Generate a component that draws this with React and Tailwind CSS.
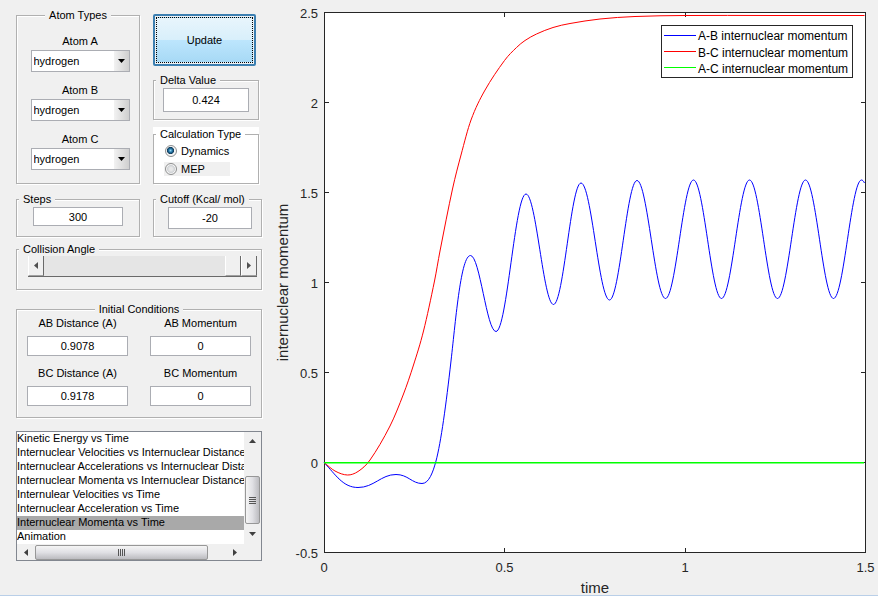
import { useState } from "react"

const plots = [
    "Kinetic Energy vs Time",
    "Internuclear Velocities vs Internuclear Distance",
    "Internuclear Accelerations vs Internuclear Distance",
    "Internuclear Momenta vs Internuclear Distance",
    "Internulear Velocities vs Time",
    "Internuclear Acceleration vs Time",
    "Internuclear Momenta vs Time",
    "Animation",
];

// turning points of the A-B curve once it starts to vibrate
const vibration = [
    [470.5, 255.5], [496, 331.5], [526, 194], [553.5, 304.5], [581, 183], [609.5, 300],
    [637, 180.5], [665.5, 298.5], [693.5, 180], [721.5, 298.5], [749.5, 180],
    [777.5, 298.5], [805.5, 180], [833.5, 298.5], [861.5, 180],
];

const bcMomentum = [
    [324, 462.5], [335, 471], [347.5, 475], [358, 471.5], [370, 460], [390, 426],
    [403.5, 394], [413.5, 365], [423.5, 331], [434.5, 281], [440, 251], [452.5, 189],
    [461, 155], [471, 120], [484.5, 91], [504.5, 60.5], [516.5, 47.5], [525, 40.5], [536.5, 34],
    [553, 27.5], [570, 23.5], [600, 19], [635, 16.5], [685, 15.5], [770, 15.5], [864.5, 15.5],
];

function wavePath(points) {
    return points.slice(1).map(([x, y], i) => {
        const [px, py] = points[i];
        const k = (x - px) * 0.3642;
        return `C${px + k} ${py} ${x - k} ${y} ${x} ${y}`;
    }).join("");
}

function smoothPath(points) {
    const slope = points.map((p, i) => {
        const a = points[Math.max(i - 1, 0)];
        const b = points[Math.min(i + 1, points.length - 1)];
        return (b[1] - a[1]) / (b[0] - a[0]);
    });
    return "M" + points[0].join(" ") + points.slice(1).map(([x, y], i) => {
        const [px, py] = points[i];
        const k = (x - px) / 3;
        return `C${px + k} ${py + slope[i] * k} ${x - k} ${y - slope[i + 1] * k} ${x} ${y}`;
    }).join("");
}

const abPath =
    "M324 462.5C336 475 343 487.5 358 487.5C374 487.5 381 474.5 396 474.5C408 474.5 412 483.5 422 483.5" +
    "C429 483.5 433 472 436 461C441 442 446 405 451 361C456 317 461 255.5 470.5 255.5" +
    wavePath(vibration) +
    "C862.5 180 863.5 181 864.5 183";

export default function App() {
    return <div className="flex min-h-screen items-start border-b border-[#b9cfe8] bg-[#f0f0f0] font-['Liberation_Sans',Arial,sans-serif] text-[11px] leading-[14px] text-black">
        <aside className="w-[270px] shrink-0 pt-2 pr-2 pb-4 pl-4">
            <div className="flex gap-[13px]">
                <Panel title="Atom Types" centered className="w-[124px]" inner="flex flex-col items-center gap-[11px] pt-3 pb-3 pl-1">
                    <AtomSelect label="Atom A" />
                    <AtomSelect label="Atom B" />
                    <AtomSelect label="Atom C" />
                </Panel>
                <div className="flex w-[106px] flex-col gap-[7px] pt-[6px]">
                    <button className="mr-[3px] h-[52px] rounded-[2px] border-2 border-[#3c7fb1] p-px">
                        <span className="flex h-full items-center justify-center border border-dotted border-black bg-[linear-gradient(#e8f5fc,#d8effb_50%,#bde6fd_50%,#a7d9f5)]">Update</span>
                    </button>
                    <Panel title="Delta Value" inner="px-[9px] pt-px pb-[7px]">
                        <NumberBox label="Delta Value" value="0.424" className="h-6" />
                    </Panel>
                    <CalculationType />
                </div>
            </div>

            <div className="mt-2 flex gap-[13px]">
                <Panel title="Steps" className="w-[124px]" inner="px-4 pt-px pb-[10px]">
                    <NumberBox label="Steps" value="300" className="h-[19px]" />
                </Panel>
                <Panel title="Cutoff (Kcal/ mol)" className="w-[109px]" inner="pr-[9px] pt-px pb-[7px] pl-[14px]">
                    <NumberBox label="Cutoff (Kcal/ mol)" value="-20" className="h-[22px]" />
                </Panel>
            </div>

            <Panel title="Collision Angle" className="mt-[5px]" inner="pr-1 pb-3 pl-[11px]">
                <AngleSlider />
            </Panel>

            <Panel title="Initial Conditions" centered className="mt-3" inner="grid grid-cols-2 gap-x-[22px] gap-y-[10px] px-[10px] pb-[11px]">
                <Field label="AB Distance (A)" value="0.9078" />
                <Field label="AB Momentum" value="0" />
                <Field label="BC Distance (A)" value="0.9178" />
                <Field label="BC Momentum" value="0" />
            </Panel>

            <PlotList />
        </aside>
        <main className="min-w-0 flex-1">
            <Chart />
        </main>
    </div>
}

function Panel({ title, centered, white, className = "", inner, children }) {
    return <fieldset className={"min-w-0 border border-[#b0b0b0] shadow-[1px_1px_0_white,inset_1px_1px_0_white] " + className}>
        <legend className={"whitespace-nowrap px-1 " + (white ? "bg-white " : "bg-[#f0f0f0] ") + (centered ? "mx-auto" : "ml-0.5")}>
            {title}
        </legend>
        <div className={inner}>{children}</div>
    </fieldset>
}

function AtomSelect({ label }) {
    return <label className="flex flex-col items-center gap-0.5">
        {label}
        <span className="relative block">
            <select className="block h-[22px] w-[99px] appearance-none border border-[#abadb3] bg-white pl-[2px]">
                <option>hydrogen</option>
                <option>fluorine</option>
                <option>chlorine</option>
            </select>
            <span className="pointer-events-none absolute inset-y-px right-px flex w-[15px] items-center justify-center bg-linear-to-r from-[#f2f2f2] to-[#cfcfcf]">
                <svg width="7" height="4" viewBox="0 0 7 4"><path d="M0 0H7L3.5 4Z" fill="#000" /></svg>
            </span>
        </span>
    </label>
}

function NumberBox({ label, value, className }) {
    return <input aria-label={label} defaultValue={value} className={"block w-full border border-[#abadb3] bg-white text-center " + className} />
}

function Field({ label, value }) {
    return <label className="flex flex-col items-center gap-[6px]">
        {label}
        <input defaultValue={value} className="block h-5 w-full border border-[#abadb3] bg-white text-center" />
    </label>
}

function CalculationType() {
    const [type, setType] = useState("Dynamics");
    return <div className="bg-white">
        <Panel title="Calculation Type" white inner="flex flex-col gap-1 px-[10px] pt-[3px] pb-[7px]">
            {["Dynamics", "MEP"].map(name => <label key={name} className={"flex h-[14px] w-[66px] items-center gap-1 pl-px " + (name === "MEP" ? "bg-[#f0f0f0]" : "")}>
                <input type="radio" name="calculation" checked={type === name} onChange={() => setType(name)}
                    className="size-3 shrink-0 appearance-none rounded-full border border-[#8e8f8f] bg-[radial-gradient(circle,#e8e8e8_20%,#cfd2d5_52%,#f4f4f4_60%)] checked:bg-[radial-gradient(circle_at_45%_45%,#8fd6f5_0%,#1f6f9f_25%,#123a57_42%,#f4f4f4_50%)]" />
                {name}
            </label>)}
        </Panel>
    </div>
}

function AngleSlider() {
    return <div className="flex h-[21px] border-b border-[#696969] bg-[#e5e5e5]">
        <button aria-label="Decrease angle" className="flex w-4 items-center justify-center border-r border-b border-l border-r-[#696969] border-b-[#a0a0a0] border-l-white bg-[#f0f0f0]">
            <svg width="4" height="7" viewBox="0 0 4 7"><path d="M4 0V7L0 3.5Z" fill="#505050" /></svg>
        </button>
        <input type="range" aria-label="Collision Angle" min="0" max="180" defaultValue="180"
            className="min-w-0 flex-1 appearance-none bg-transparent [&::-webkit-slider-thumb]:h-5 [&::-webkit-slider-thumb]:w-4 [&::-webkit-slider-thumb]:appearance-none [&::-webkit-slider-thumb]:border-r [&::-webkit-slider-thumb]:border-b [&::-webkit-slider-thumb]:border-l [&::-webkit-slider-thumb]:border-r-[#696969] [&::-webkit-slider-thumb]:border-b-[#a0a0a0] [&::-webkit-slider-thumb]:border-l-white [&::-webkit-slider-thumb]:bg-[#f0f0f0]" />
        <button aria-label="Increase angle" className="flex w-4 items-center justify-center border-r border-b border-l border-r-[#696969] border-b-[#a0a0a0] border-l-white bg-[#f0f0f0]">
            <svg width="4" height="7" viewBox="0 0 4 7"><path d="M0 0V7L4 3.5Z" fill="#505050" /></svg>
        </button>
    </div>
}

function PlotList() {
    return <div className="mt-[13px] grid grid-cols-[1fr_17px] border border-[#828790] bg-white">
        <select size={8} aria-label="Plot type" defaultValue="Internuclear Momenta vs Time"
            className="block h-28 w-full min-w-0 appearance-none overflow-hidden border-0 bg-white p-0">
            {plots.map(name => <option key={name} className="h-[14px] min-h-0 p-0 leading-[14px] text-black checked:bg-[linear-gradient(#a9a9a9,#a9a9a9)]">{name}</option>)}
        </select>
        <div className="flex flex-col items-center bg-[#f0f0f0]">
            <span className="flex h-[17px] items-center"><svg width="7" height="4" viewBox="0 0 7 4"><path d="M0 4H7L3.5 0Z" fill="#404040" /></svg></span>
            <span className="mt-auto flex h-12 w-[15px] flex-col items-center justify-center gap-px rounded-[2px] border border-[#979797] bg-linear-to-r from-[#f5f5f5] via-[#e0e0e4] to-[#bcbcc0]">
                <i className="h-px w-[7px] bg-[#555]" />
                <i className="h-px w-[7px] bg-[#555]" />
                <i className="h-px w-[7px] bg-[#555]" />
                <i className="h-px w-[7px] bg-[#555]" />
            </span>
            <span className="flex h-5 items-center"><svg width="7" height="4" viewBox="0 0 7 4"><path d="M0 0H7L3.5 4Z" fill="#404040" /></svg></span>
        </div>
        <div className="flex h-4 items-center justify-between bg-[#f0f0f0]">
            <span className="flex w-[18px] justify-center"><svg width="4" height="7" viewBox="0 0 4 7"><path d="M4 0V7L0 3.5Z" fill="#404040" /></svg></span>
            <span className="mr-auto flex h-[15px] w-[76%] items-center justify-center gap-px rounded-[2px] border border-[#979797] bg-linear-to-b from-[#f5f5f5] via-[#e0e0e4] to-[#bcbcc0]">
                <i className="h-[7px] w-px bg-[#555]" />
                <i className="h-[7px] w-px bg-[#555]" />
                <i className="h-[7px] w-px bg-[#555]" />
                <i className="h-[7px] w-px bg-[#555]" />
            </span>
            <span className="flex w-[18px] justify-center"><svg width="4" height="7" viewBox="0 0 4 7"><path d="M0 0V7L4 3.5Z" fill="#404040" /></svg></span>
        </div>
        <div className="bg-[#f0f0f0]" />
    </div>
}

function Chart() {
    const yTicks = ["2.5", "2", "1.5", "1", "0.5", "0", "-0.5"];
    const xTicks = ["0", "0.5", "1", "1.5"];
    const legend = [["A-B", "#0000ff"], ["B-C", "#ff0000"], ["A-C", "#00ff00"]];

    return <svg viewBox="270 0 608 595" className="block h-auto w-full" fill="#262626">
        <rect x="324.5" y="12.5" width="541" height="540" fill="#fff" stroke="#262626" />
        <g stroke="#262626">
            {[102.5, 192.5, 282.5, 372.5, 462.5].map(y => <path key={y} d={`M324 ${y}h5M866 ${y}h-5`} />)}
            {[504.5, 685.5].map(x => <path key={x} d={`M${x} 12v5M${x} 553v-5`} />)}
        </g>
        <g fill="none">
            <path d={abPath} stroke="#0000ff" />
            <path d={smoothPath(bcMomentum)} stroke="#ff0000" />
            <path d="M324 462.8H864" stroke="#00ff00" strokeWidth="1.5" />
        </g>
        <g className="text-[13px]" textAnchor="end">
            {yTicks.map((t, i) => <text key={t} x="318" y={18 + i * 90}>{t}</text>)}
        </g>
        <g className="text-[13px]" textAnchor="middle">
            {xTicks.map((t, i) => <text key={t} x={324 + i * 180.5} y="572">{t}</text>)}
        </g>
        <g className="text-[15px]" textAnchor="middle">
            <text x="595" y="593">time</text>
            <text transform="translate(288 282.5) rotate(-90)">internuclear momentum</text>
        </g>
        <rect x="661.5" y="25.5" width="191" height="52" fill="#fff" stroke="#262626" />
        <g className="text-[12px]" fill="#000">
            {legend.map(([pair, color], i) => <g key={pair}>
                <path d={`M664 ${35.5 + i * 16}h32`} stroke={color} />
                <text x="698" y={40 + i * 16.5}>{pair} internuclear momentum</text>
            </g>)}
        </g>
    </svg>
}
